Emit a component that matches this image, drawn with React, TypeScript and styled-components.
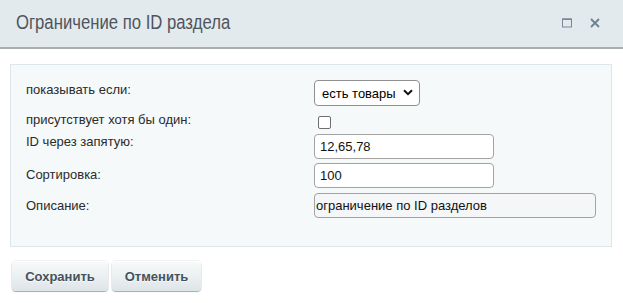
import React from "react";
import styled, { createGlobalStyle } from "styled-components";

const Global = createGlobalStyle`
  html, body { margin: 0; padding: 0; background: #fff; }
  body { font-family: "Liberation Sans", Arial, sans-serif; width: 623px; height: 303px; overflow: hidden; }
  * { box-sizing: border-box; }
`;

const Dialog = styled.div`
  width: 623px;
  height: 303px;
  display: flex;
  flex-direction: column;
`;

const Header = styled.div`
  height: 49px;
  flex: none;
  background: #e3eaee;
  border-bottom: 2px solid #a9aeb1;
  display: flex;
  align-items: center;
  padding: 0 23px 2px 16px;
`;

const TitleBox = styled.div`
  flex: 1;
`;

const Title = styled.span`
  display: inline-block;
  font-family: "Liberation Sans", Arial, sans-serif;
  font-size: 20px;
  color: #4f555c;
  transform: scaleX(0.835);
  transform-origin: left center;
  white-space: nowrap;
`;

const IconBtn = styled.span`
  width: 10px;
  height: 10px;
  margin-left: 18px;
  display: flex;
  align-items: center;
  justify-content: center;
`;

const Body = styled.div`
  padding: 15px 11px 0 10px;
`;

const Panel = styled.div`
  height: 183px;
  background: #f5f9f9;
  border: 1px solid #dde6ea;
  padding: 15px 15px 0 15px;
`;

const Row = styled.div<{ $mt: number; $h: number }>`
  display: grid;
  grid-template-columns: 288px 1fr;
  align-items: center;
  margin-top: ${(p) => p.$mt}px;
  height: ${(p) => p.$h}px;
`;

const Label = styled.label<{ $off: number }>`
  align-self: start;
  font-size: 13px;
  line-height: 15px;
  color: #2b2b2b;
  margin-top: ${(p) => p.$off}px;
`;

const SelectWrap = styled.div`
  position: relative;
  width: 106px;
  height: 26px;
`;

const Select = styled.select`
  appearance: none;
  -webkit-appearance: none;
  width: 106px;
  height: 26px;
  border: 1px solid #8f8f8f;
  border-radius: 4px;
  background: #fff;
  font-family: "Liberation Sans", Arial, sans-serif;
  font-size: 13px;
  color: #000;
  padding: 0 0 0 7px;
  outline: none;
`;

const Chevron = styled.svg`
  position: absolute;
  right: 7px;
  top: 9px;
  pointer-events: none;
`;

const Check = styled.input`
  width: 13px;
  height: 13px;
  margin: 0 0 0 4px;
  appearance: none;
  -webkit-appearance: none;
  border: 1px solid #6f6f6f;
  border-radius: 2px;
  background: #fff;
`;

const Input = styled.input<{ $w: number; $muted?: boolean }>`
  width: ${(p) => p.$w}px;
  height: 25px;
  border: 1px solid #a3a3a3;
  border-radius: 4px;
  background: ${(p) => (p.$muted ? "#f4f6f7" : "#fff")};
  font-family: "Liberation Sans", Arial, sans-serif;
  font-size: 13px;
  color: #111;
  padding: 0 0 0 ${(p) => (p.$muted ? 1 : 5)}px;
  outline: none;
`;

const Buttons = styled.div`
  display: flex;
  gap: 4px;
  padding: 14px 0 0 2px;
`;

const Button = styled.button<{ $w: number }>`
  width: ${(p) => p.$w}px;
  height: 30px;
  border: none;
  border-radius: 4px;
  background: linear-gradient(to bottom, #f8fafa 0%, #e9eef0 60%, #dde4e7 100%);
  box-shadow: 0 1px 1px rgba(0, 0, 0, 0.3), inset 0 1px #fff, 0 0 0 1px rgba(0,0,0,0.06);
  font-family: "Liberation Sans", Arial, sans-serif;
  font-size: 13px;
  font-weight: bold;
  color: #46525b;
  text-shadow: 0 1px rgba(255, 255, 255, 0.7);
  padding: 0;
`;

export default function App() {
  return (
    <>
      <Global />
      <Dialog>
        <Header>
          <TitleBox>
            <Title>Ограничение по ID раздела</Title>
          </TitleBox>
          <IconBtn>
            <svg width="10" height="10" viewBox="0 0 10 10">
              <rect x="0.5" y="1" width="9" height="8" fill="none" stroke="#7b8899" strokeWidth="1" />
              <rect x="0.5" y="0.5" width="9" height="1.5" fill="#7b8899" />
            </svg>
          </IconBtn>
          <IconBtn>
            <svg width="10" height="10" viewBox="0 0 10 10">
              <path d="M1 1 L9 9 M9 1 L1 9" stroke="#6f7f92" strokeWidth="1.8" />
            </svg>
          </IconBtn>
        </Header>
        <Body>
          <Panel>
            <Row $mt={0} $h={26}>
              <Label $off={2}>показывать если:</Label>
              <SelectWrap>
                <Select defaultValue="a">
                  <option value="a">есть товары</option>
                </Select>
                <Chevron width="10" height="7" viewBox="0 0 10 7">
                  <path d="M1 1.2 L5 5.2 L9 1.2" fill="none" stroke="#111" strokeWidth="2" />
                </Chevron>
              </SelectWrap>
            </Row>
            <Row $mt={10} $h={13}>
              <Label $off={-4}>присутствует хотя бы один:</Label>
              <Check type="checkbox" />
            </Row>
            <Row $mt={5} $h={25}>
              <Label $off={0}>ID через запятую:</Label>
              <Input $w={180} defaultValue="12,65,78" />
            </Row>
            <Row $mt={4} $h={25}>
              <Label $off={4}>Сортировка:</Label>
              <Input $w={180} defaultValue="100" />
            </Row>
            <Row $mt={4} $h={26}>
              <Label $off={6}>Описание:</Label>
              <Input $w={282} $muted defaultValue="ограничение по ID разделов" />
            </Row>
          </Panel>
          <Buttons>
            <Button $w={96}>Сохранить</Button>
            <Button $w={89}>Отменить</Button>
          </Buttons>
        </Body>
      </Dialog>
    </>
  );
}
